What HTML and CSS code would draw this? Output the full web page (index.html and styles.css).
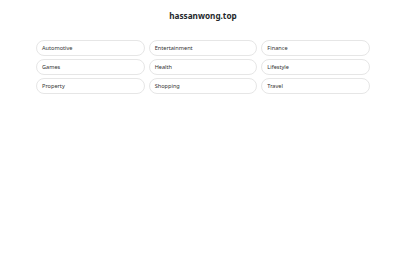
FILE: index.html
```html
<!DOCTYPE html>
<html lang="en">
<head>
  <meta charset="UTF-8">
  <meta name="viewport" content="width=device-width, initial-scale=1.0">
  <title>hassanwong.top</title>
  <link rel="stylesheet" href="styles.css">
</head>
<body>
  <h1 class="site-title">hassanwong.top</h1>

  <div class="categories">
    <a class="category" href="#">Automotive</a>
    <a class="category" href="#">Entertainment</a>
    <a class="category" href="#">Finance</a>
    <a class="category" href="#">Games</a>
    <a class="category" href="#">Health</a>
    <a class="category" href="#">Lifestyle</a>
    <a class="category" href="#">Property</a>
    <a class="category" href="#">Shopping</a>
    <a class="category" href="#">Travel</a>
  </div>
</body>
</html>
```

FILE: styles.css
```css
body {
  font-family: "Noto Sans", "Open Sans", sans-serif;
  margin: 0;
  background-color: #fff;
  color: #222;
}
.site-title {
  margin: 0;
  padding-top: 10px;
  padding-left: 6px;
  font-size: 8.2px;
  line-height: 12px;
  font-weight: bold;
  text-align: center;
  color: #24272b;
}
.categories {
  display: grid;
  grid-template-columns: repeat(3, 1fr);
  gap: 3px 4px;
  width: 334px;
  margin: 18px 0 0 36px;
}
.category {
  display: flex;
  align-items: center;
  height: 16px;
  box-sizing: border-box;
  padding: 0 5px;
  border: 1px solid #e6e6e6;
  border-radius: 8px;
  font-size: 5.6px;
  color: #333;
  text-decoration: none;
}
```
